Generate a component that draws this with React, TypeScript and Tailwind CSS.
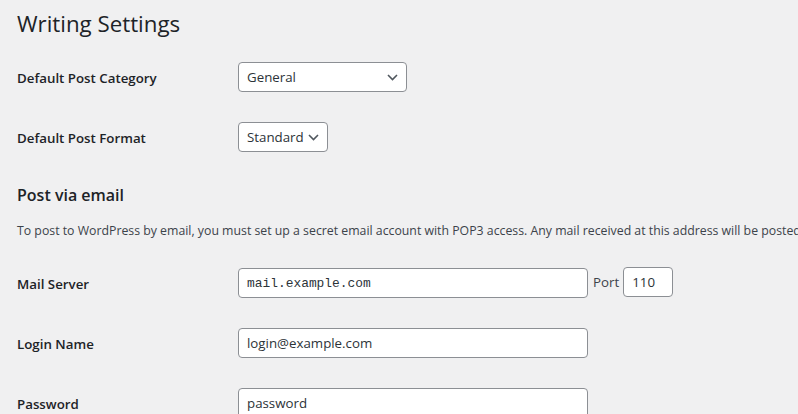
import React from "react";

const sans = "font-['Open_Sans',sans-serif]";

function Chevron() {
  return (
    <svg width="11" height="7" viewBox="0 0 11 7" className="shrink-0">
      <path d="M1 1 L5.5 5.5 L10 1" fill="none" stroke="#50575e" strokeWidth="1.6" />
    </svg>
  );
}

function Select({ value, width }: { value: string; width: string }) {
  return (
    <div
      className={`flex h-[30px] items-center justify-between rounded-[4px] border border-[#8c8f94] bg-white pl-[8px] pr-[8px] text-[13.3px] text-[#2c3338] ${width}`}
    >
      <span className="pt-[2px]">{value}</span>
      <Chevron />
    </div>
  );
}

function Input({ value, width, mono }: { value: string; width: string; mono?: boolean }) {
  return (
    <div
      className={`flex h-[30px] items-center rounded-[4px] border border-[#8c8f94] bg-white px-[8px] pt-[2px] text-[#2c3338] ${width} ${
        mono ? "font-['Liberation_Mono',monospace] text-[12.9px]" : "text-[13.3px]"
      }`}
    >
      {value}
    </div>
  );
}

function Row({ label, children }: { label: string; children: React.ReactNode }) {
  return (
    <div className="flex h-[60px]">
      <div className="w-[221px] shrink-0 pt-[22px] text-[13.3px] font-semibold leading-[18px] text-[#1d2327]">
        {label}
      </div>
      <div className="flex items-start pt-[15px]">{children}</div>
    </div>
  );
}

export default function App() {
  return (
    <div className={`h-[414px] w-[798px] overflow-hidden bg-[#f0f0f1] pl-[17px] ${sans}`}>
      <h1 className="h-[47px] pt-[9px] text-[22.3px] font-normal leading-[30px] text-[#1d2327]">Writing Settings</h1>
      <Row label="Default Post Category">
        <Select value="General" width="w-[169px]" />
      </Row>
      <Row label="Default Post Format">
        <Select value="Standard" width="w-[90px]" />
      </Row>
      <h2 className="mt-[17px] text-[16px] font-semibold leading-[22px] text-[#1d2327]">Post via email</h2>
      <p className="mt-[15px] whitespace-nowrap text-[12.3px] leading-[19px] text-[#3c434a]">
        To post to WordPress by email, you must set up a secret email account with POP3 access. Any mail received at this address will be posted, so it’s a good idea to keep this address very secret.
      </p>
      <div className="mt-[13px]">
        <Row label="Mail Server">
          <Input value="mail.example.com" width="w-[350px]" mono />
          <div className="ml-[5px] mr-[4px] flex h-[30px] items-center text-[13.3px] text-[#3c434a]">Port</div>
          <div className="-mt-[1px]">
            <Input value="110" width="w-[50px]" />
          </div>
        </Row>
        <Row label="Login Name">
          <Input value="login@example.com" width="w-[350px]" />
        </Row>
        <Row label="Password">
          <Input value="password" width="w-[350px]" />
        </Row>
      </div>
    </div>
  );
}
